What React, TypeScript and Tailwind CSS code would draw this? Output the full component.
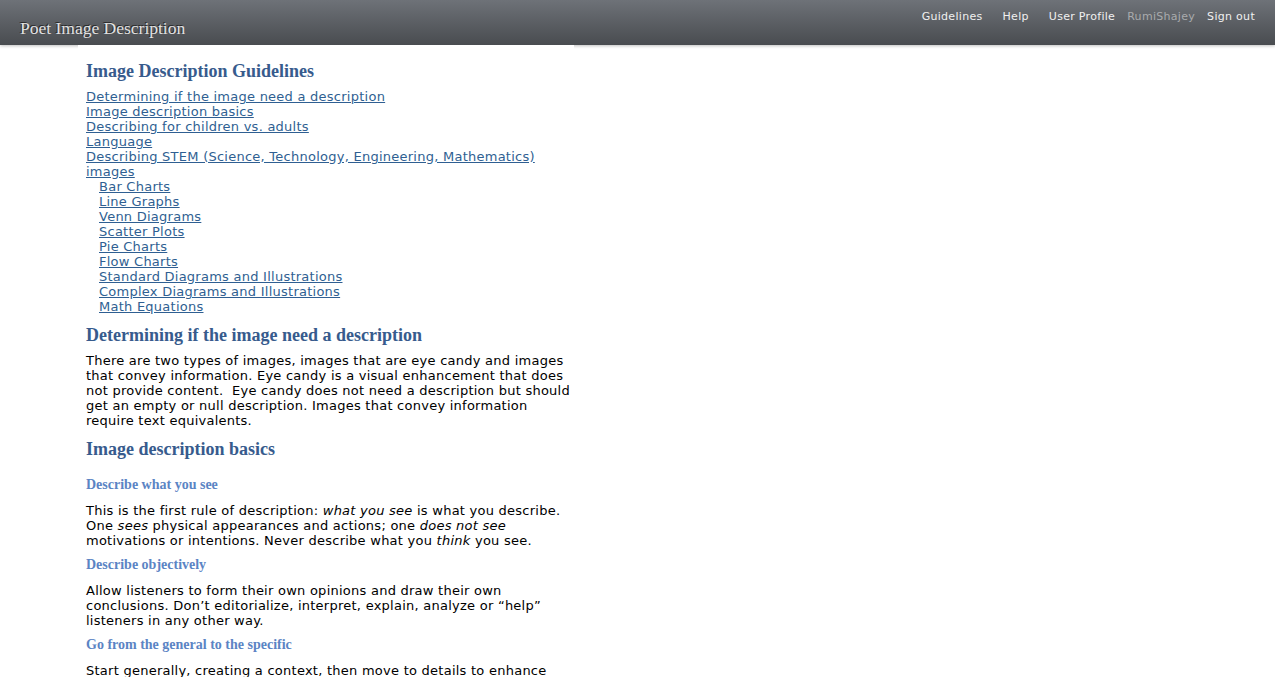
import React from "react";

const toc = [
  "Determining if the image need a description",
  "Image description basics",
  "Describing for children vs. adults",
  "Language",
];

const stem = [
  "Bar Charts",
  "Line Graphs",
  "Venn Diagrams",
  "Scatter Plots",
  "Pie Charts",
  "Flow Charts",
  "Standard Diagrams and Illustrations",
  "Complex Diagrams and Illustrations",
  "Math Equations",
];

const navItems = ["Guidelines", "Help", "User Profile"];

function H2({ children, className = "" }: { children: React.ReactNode; className?: string }) {
  return (
    <h2 className={`font-['Liberation_Serif',serif] text-[18px] leading-[22px] font-bold tracking-normal text-[#375b8d] ${className}`}>
      {children}
    </h2>
  );
}

function H3({ children, className = "" }: { children: React.ReactNode; className?: string }) {
  return (
    <h3 className={`font-['Liberation_Serif',serif] text-[14px] leading-[18px] font-bold tracking-normal text-[#5b84c4] ${className}`}>
      {children}
    </h3>
  );
}

export default function App() {
  return (
    <div className="min-h-screen bg-white font-['DejaVu_Sans',Verdana,sans-serif]">
      <header className="relative h-[45px] flex items-start justify-between bg-gradient-to-b from-[#6e7278] to-[#494c50] shadow-[0_1px_3px_rgba(0,0,0,0.25)]">
        <div className="pl-5 pt-[17px] font-['Liberation_Serif',serif] text-[17.5px] leading-[22px] text-[#e2e2e2] [text-shadow:-1px_-1px_0_#2a2a2a]">
          Poet Image Description
        </div>
        <nav className="flex items-center pt-[10px] pr-5 text-[11px] leading-[14px] tracking-[0.3px] text-[#f0f0f0]">
          {navItems.map((n) => (
            <a key={n} className="ml-5 cursor-pointer">
              {n}
            </a>
          ))}
          <span className="ml-3 text-[#a9abad]">RumiShajey</span>
          <a className="ml-3 cursor-pointer">Sign out</a>
        </nav>
      </header>

      <main className="relative z-10 ml-[78px] w-[496px] bg-white px-2 pt-[15px] text-[13px] leading-[15px] tracking-[0.25px] text-black whitespace-nowrap">
        <H2>Image Description Guidelines</H2>

        <ul className="mt-[7px]">
          {toc.map((t) => (
            <li key={t}>
              <a className="text-[#2f5f92] underline cursor-pointer">{t}</a>
            </li>
          ))}
          <li>
            <a className="text-[#2f5f92] underline cursor-pointer">
              Describing STEM (Science, Technology, Engineering, Mathematics)
              <br />
              images
            </a>
            <ul className="pl-[13px]">
              {stem.map((s) => (
                <li key={s}>
                  <a className="text-[#2f5f92] underline cursor-pointer">{s}</a>
                </li>
              ))}
            </ul>
          </li>
        </ul>

        <H2 className="mt-[10px]">Determining if the image need a description</H2>
        <p className="mt-[7px]">
          There are two types of images, images that are eye candy and images
          <br />
          that convey information. Eye candy is a visual enhancement that does
          <br />
          not provide content.&nbsp; Eye candy does not need a description but should
          <br />
          get an empty or null description. Images that convey information
          <br />
          require text equivalents.
        </p>

        <H2 className="mt-[10px]">Image description basics</H2>

        <H3 className="mt-[16px]">Describe what you see</H3>
        <p className="mt-[9px]">
          This is the first rule of description: <em>what you see</em> is what you describe.
          <br />
          One <em>sees</em> physical appearances and actions; one <em>does not see</em>
          <br />
          motivations or intentions. Never describe what you <em>think</em> you see.
        </p>

        <H3 className="mt-[8px]">Describe objectively</H3>
        <p className="mt-[9px]">
          Allow listeners to form their own opinions and draw their own
          <br />
          conclusions. Don’t editorialize, interpret, explain, analyze or “help”
          <br />
          listeners in any other way.
        </p>

        <H3 className="mt-[8px]">Go from the general to the specific</H3>
        <p className="mt-[9px]">
          Start generally, creating a context, then move to details to enhance
        </p>
      </main>
    </div>
  );
}
